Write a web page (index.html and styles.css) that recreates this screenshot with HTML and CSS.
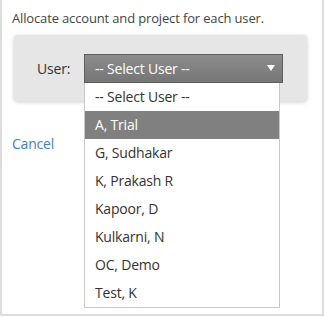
FILE: index.html
```html
<!DOCTYPE html>
<html lang="en">
<head>
  <meta charset="UTF-8">
  <title>Allocate User</title>
  <link rel="stylesheet" href="styles.css">
</head>
<body>

  <div class="modal">
    <p class="intro">Allocate account and project for each user.</p>

    <div class="panel">
      <label class="label">User:</label>
      <div class="select-wrap">
        <div class="select">
          <span>-- Select User --</span>
          <span class="arrow"></span>
        </div>
        <ul class="options">
          <li>-- Select User --</li>
          <li class="active">A, Trial</li>
          <li>G, Sudhakar</li>
          <li>K, Prakash R</li>
          <li>Kapoor, D</li>
          <li>Kulkarni, N</li>
          <li>OC, Demo</li>
          <li>Test, K</li>
        </ul>
      </div>
    </div>

    <a class="cancel" href="#">Cancel</a>
  </div>

</body>
</html>
```
FILE: styles.css
```css
body {
  margin: 0;
  background-color: #fff;
  font-family: 'Open Sans', 'Noto Sans', Arial, sans-serif;
  color: #333;
}

.modal {
  box-sizing: border-box;
  width: 324px;
  height: 316px;
  padding: 8px 15px 0 12px;
  border: 2px solid #dcdcdc;
  border-top: none;
  border-left-width: 2px;
}

.intro {
  margin: 0 0 7px -2px;
  font-size: 13px;
  line-height: 20px;
  letter-spacing: -0.15px;
  color: #444;
}

.panel {
  display: flex;
  align-items: center;
  height: 66px;
  box-sizing: border-box;
  padding: 0 0 0 23px;
  background-color: #e6e6e6;
  border-radius: 4px;
  box-shadow: 0 1px 4px rgba(0, 0, 0, 0.2);
}

.label {
  width: 47px;
  font-size: 14px;
  letter-spacing: -0.2px;
  color: #333;
}

.select-wrap {
  position: relative;
}

.select {
  box-sizing: border-box;
  display: flex;
  align-items: center;
  justify-content: space-between;
  width: 199px;
  height: 29px;
  padding: 0 7px 0 10px;
  background: linear-gradient(#8c8c8c, #767676);
  border: 1px solid #5e5e5e;
  color: #fff;
  font-size: 14px;
  letter-spacing: -0.2px;
}

.arrow {
  width: 0;
  height: 0;
  border-left: 4.5px solid transparent;
  border-right: 4.5px solid transparent;
  border-top: 6px solid #fff;
}

.options {
  position: absolute;
  top: 29px;
  left: 0;
  box-sizing: border-box;
  width: 196px;
  margin: 0;
  padding: 0;
  list-style: none;
  background-color: #fff;
  border: 1px solid #c8c8c8;
  border-top: none;
  z-index: 2;
}

.options li {
  height: 28px;
  padding-left: 10px;
  font-size: 14px;
  line-height: 28px;
  letter-spacing: -0.2px;
  color: #333;
}

.options li.active {
  background-color: #808080;
  color: #fff;
}

.cancel {
  display: inline-block;
  margin: 33px 0 0 -2px;
  font-size: 14px;
  line-height: 20px;
  letter-spacing: -0.2px;
  color: #3a7fd5;
  text-decoration: none;
}
```
